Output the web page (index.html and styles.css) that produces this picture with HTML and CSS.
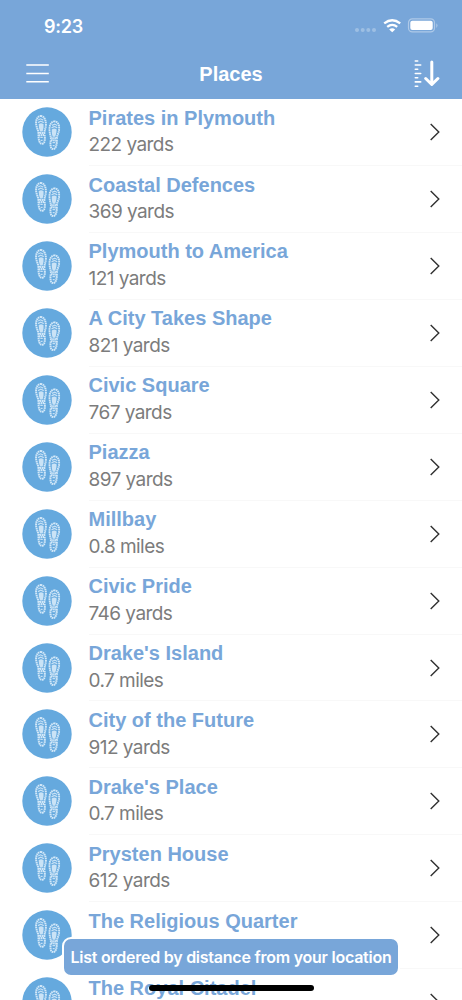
FILE: index.html
```
<!DOCTYPE html>
<html lang="en">
<head>
<meta charset="utf-8">
<title>Places</title>
<link rel="stylesheet" href="styles.css">
</head>
<body>
<svg class="defs" width="0" height="0" aria-hidden="true">
  <symbol id="sole" viewBox="0 0 12 30">
    <path class="tread" d="M5.6 1.1C8.900 1 11 5 10.900 9.500c-.1 4-1.400 5.500-1.500 8.600H3.500C3.200 14.500 1 12 1.100 7.800 1.200 3.800 3.200 1.200 5.600 1.100Z"/>
    <path class="tread" d="M3.500 20.600l6-.700c.6 3 .7 8.700-2.200 9-3 .4-3.800-4.700-3.800-8.300Z"/>
    <path class="bars" d="M3.200 5.200l2.300-1.300 2.800 1.300M3 7.700l2.800-1.400 3 1.400M5.300 22.500h2.500M5.600 25.500h2"/>
    <path class="pad" d="M3.600 9.300q2.400-2 5 0 .4 3.200-1 7.200H5Q3.700 13 3.600 9.300Z"/>
  </symbol>
  <symbol id="steps" viewBox="0 0 50 50">
    <circle class="disc" cx="25" cy="25" r="24.700"/>
    <use href="#sole" x="13" y="7.900" width="12" height="30"/>
    <use href="#sole" x="0" y="0" width="12" height="30" transform="translate(38.300 13.200) scale(-1 1)"/>
  </symbol>
  <symbol id="chevron" viewBox="0 0 10 18"><path class="chev" d="M.7.900 8.800 9 .7 17.100"/></symbol>
</svg>
<div class="screen">
  <header class="header">
    <div class="status">
      <span class="time">9:23</span>
      <svg class="indicators" width="84" height="16" viewBox="0 0 84 16">
        <g class="faint"><circle cx="3" cy="12" r="2"/><circle cx="8.700" cy="12" r="2"/><circle cx="14.300" cy="12" r="2"/><circle cx="20" cy="12" r="2"/></g>
        <path class="wifi" d="M30.200 5.400q8-6.400 16 0M33.200 8.900q5-4 10 0"/>
        <path class="solid" d="M35.200 11.400q3-2.200 6 0l-3 2.900Z"/>
        <rect class="case" x="54.500" y=".900" width="26" height="13" rx="3.800"/>
        <rect class="solid" x="56.300" y="2.800" width="22.400" height="9.300" rx="2"/>
        <path class="faint" d="M82 5.300q1.700 1 1.700 2.300T82 9.900Z"/>
      </svg>
    </div>
    <div class="nav">
      <svg class="menu" width="23" height="20" viewBox="0 0 23 20"><path d="M.3 2h22.500M.3 10.400h22.500M.3 18.700h22.500"/></svg>
      <h1 class="heading">Places</h1>
      <svg class="sort" width="26" height="29" viewBox="0 0 26 29">
        <path class="ticks" d="M1.300 2h2.400M1.300 6h5.400M1.300 10.200h2.400M1.300 14.500h5.400M1.300 18.700h2.400M1.300 22.900h5.400M1.300 27.200h2.400"/>
        <path class="arrow" d="M17.800 3v22M11.700 19.500l6.100 6 6.100-6"/>
      </svg>
    </div>
  </header>
  <main class="list">
    <article class="row"><svg class="icon"><use href="#steps"/></svg><div class="body"><div class="text"><h2 class="name">Pirates in Plymouth</h2><p class="distance">222 yards</p></div><svg class="next"><use href="#chevron"/></svg></div></article>
    <article class="row"><svg class="icon"><use href="#steps"/></svg><div class="body"><div class="text"><h2 class="name">Coastal Defences</h2><p class="distance">369 yards</p></div><svg class="next"><use href="#chevron"/></svg></div></article>
    <article class="row"><svg class="icon"><use href="#steps"/></svg><div class="body"><div class="text"><h2 class="name">Plymouth to America</h2><p class="distance">121 yards</p></div><svg class="next"><use href="#chevron"/></svg></div></article>
    <article class="row"><svg class="icon"><use href="#steps"/></svg><div class="body"><div class="text"><h2 class="name">A City Takes Shape</h2><p class="distance">821 yards</p></div><svg class="next"><use href="#chevron"/></svg></div></article>
    <article class="row"><svg class="icon"><use href="#steps"/></svg><div class="body"><div class="text"><h2 class="name">Civic Square</h2><p class="distance">767 yards</p></div><svg class="next"><use href="#chevron"/></svg></div></article>
    <article class="row"><svg class="icon"><use href="#steps"/></svg><div class="body"><div class="text"><h2 class="name">Piazza</h2><p class="distance">897 yards</p></div><svg class="next"><use href="#chevron"/></svg></div></article>
    <article class="row"><svg class="icon"><use href="#steps"/></svg><div class="body"><div class="text"><h2 class="name">Millbay</h2><p class="distance">0.8 miles</p></div><svg class="next"><use href="#chevron"/></svg></div></article>
    <article class="row"><svg class="icon"><use href="#steps"/></svg><div class="body"><div class="text"><h2 class="name">Civic Pride</h2><p class="distance">746 yards</p></div><svg class="next"><use href="#chevron"/></svg></div></article>
    <article class="row"><svg class="icon"><use href="#steps"/></svg><div class="body"><div class="text"><h2 class="name">Drake's Island</h2><p class="distance">0.7 miles</p></div><svg class="next"><use href="#chevron"/></svg></div></article>
    <article class="row"><svg class="icon"><use href="#steps"/></svg><div class="body"><div class="text"><h2 class="name">City of the Future</h2><p class="distance">912 yards</p></div><svg class="next"><use href="#chevron"/></svg></div></article>
    <article class="row"><svg class="icon"><use href="#steps"/></svg><div class="body"><div class="text"><h2 class="name">Drake's Place</h2><p class="distance">0.7 miles</p></div><svg class="next"><use href="#chevron"/></svg></div></article>
    <article class="row"><svg class="icon"><use href="#steps"/></svg><div class="body"><div class="text"><h2 class="name">Prysten House</h2><p class="distance">612 yards</p></div><svg class="next"><use href="#chevron"/></svg></div></article>
    <article class="row"><svg class="icon"><use href="#steps"/></svg><div class="body"><div class="text"><h2 class="name">The Religious Quarter</h2></div><svg class="next"><use href="#chevron"/></svg></div></article>
    <article class="row"><svg class="icon"><use href="#steps"/></svg><div class="body"><div class="text"><h2 class="name">The Royal Citadel</h2></div><svg class="next"><use href="#chevron"/></svg></div></article>
  </main>
  <div class="toast">List ordered by distance from your location</div>
  <div class="home-bar"></div>
</div>
</body>
</html>
```
FILE: styles.css
```
* { box-sizing: border-box; }
body { margin: 0; background: #fff; }
.defs { position: absolute; }
.screen {
  position: relative;
  width: 462px;
  height: 1000px;
  overflow: hidden;
  background: #fff;
  font-family: Inter, "Liberation Sans", sans-serif;
}
.header {
  height: 98.500px;
  background: #78a6d9;
  color: #fff;
}
.status {
  display: flex;
  justify-content: space-between;
  align-items: center;
  height: 50px;
  padding: 2px 24px 0 44px;
}
.time { font-size: 18px; font-weight: 600; letter-spacing: -.25px; }
.faint { fill: #fff; opacity: .28; }
.solid { fill: #fff; }
.case { fill: none; stroke: #fff; stroke-opacity: .4; stroke-width: 1.200; }
.wifi { fill: none; stroke: #fff; stroke-width: 2.300; }
.nav {
  display: grid;
  grid-template-columns: 1fr auto 1fr;
  align-items: center;
  height: 46px;
  padding: 0 22px 0 26px;
}
.menu path { stroke: #fff; stroke-width: 1.500; }
.heading {
  margin: 1px 0 0;
  font: bold 20px/24px "Liberation Sans", sans-serif;
  transform: translateX(-2px);
}
.sort { justify-self: end; }
.ticks { stroke: #fff; stroke-width: 1.600; stroke-linecap: round; }
.arrow { fill: none; stroke: #fff; stroke-width: 3; stroke-linecap: round; stroke-linejoin: round; }
.list { padding-top: .500px; }
.row {
  display: flex;
  height: 66.940px;
  padding-left: 22px;
}
.icon { flex: none; width: 50px; height: 50px; margin-top: 8px; }
.disc { fill: #65a9de; }
.tread { fill: none; stroke: #d3e8f8; stroke-width: 2; stroke-dasharray: 1.600 .5; }
.bars { fill: none; stroke: #c5e0f5; stroke-width: 1.200; }
.pad { fill: #cae3f6; }
.body {
  flex: 1;
  display: flex;
  justify-content: space-between;
  margin-left: 16.500px;
  padding-right: 22px;
  border-bottom: 1px solid #f8f8f8;
}
.text { padding-top: 6.600px; }
.name {
  margin: 0;
  color: #78a6d9;
  font: bold 20px/24px "Liberation Sans", sans-serif;
  white-space: nowrap;
}
.distance {
  margin: 3.500px 0 0;
  color: #7c7c7c;
  font-size: 19px;
  letter-spacing: -.550px;
  line-height: 24px;
}
.next { width: 10px; height: 18px; margin-top: 24px; }
.chev { fill: none; stroke: #303030; stroke-width: 1.400; }
.toast {
  position: absolute;
  left: 62px;
  top: 937px;
  width: 338px;
  height: 40px;
  border: 2px solid #fff;
  border-radius: 9px;
  background: #78a6d9;
  color: #fff;
  font-size: 16px;
  font-weight: 600;
  letter-spacing: -.240px;
  line-height: 37px;
  text-align: center;
  white-space: nowrap;
}
.home-bar {
  position: absolute;
  left: 148.500px;
  top: 985px;
  width: 165px;
  height: 6px;
  border-radius: 3px;
  background: #000;
}
```
